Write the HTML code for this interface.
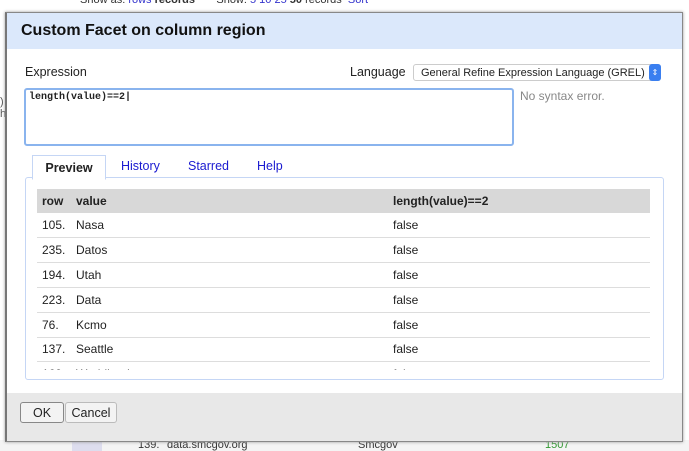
<!DOCTYPE html>
<html><head><style>
body{margin:0;width:689px;height:451px;overflow:hidden;background:#fff;font-family:"Liberation Sans",sans-serif;position:relative;font-size:12px;color:#222}
.a{position:absolute}
.dlg{left:5px;top:12px;width:675px;height:428px;border:1px solid #888;border-left:2px solid #777;background:#fff;box-shadow:0 0 3px #999}
.hdr{left:0;top:0;width:675px;height:36px;background:#dbe8fb;font-size:16px;font-weight:bold;line-height:36px;padding-left:14px;box-sizing:border-box;color:#111}
.tbl div{position:absolute}
.row{left:0;width:613px;height:24px;border-bottom:1px solid #ddd;line-height:24px}
.tab{top:146px;font-size:12.5px;color:#1a1ad0}
</style></head><body>
<div class="a" style="left:80px;top:-6px;font-size:11px;color:#333">Show as: <span style="color:#33c">rows</span> <b>records</b> &nbsp;&nbsp;&nbsp;&nbsp;&nbsp; Show: <span style="color:#33c">5 10 25</span> <b>50</b> records &nbsp;<span style="color:#33c">Sort</span></div>
<div class="a" style="left:0;top:96px;font-size:11px;color:#555">)<br>h</div>
<div class="a" style="left:0;top:440px;width:689px;height:11px;background:#f4f4f4;font-size:11px;line-height:10px;color:#333"><span class="a" style="left:72px;width:30px;height:11px;background:#dde"></span><span class="a" style="left:138px">139.</span><span class="a" style="left:167px">data.smcgov.org</span><span class="a" style="left:358px">Smcgov</span><span class="a" style="left:545px;color:#393">1507</span></div>
<div class="a dlg">
<div class="a hdr">Custom Facet on column region</div>
<div class="a" style="left:18px;top:52px;font-size:12.5px">Expression</div>
<div class="a" style="left:343px;top:52px;font-size:12.5px">Language</div>
<div class="a" style="left:406px;top:51px;width:248px;height:17px;border:1px solid #ccc;border-radius:3px;background:#fff;font-size:11px;line-height:17px;padding-left:7px;box-sizing:border-box">General Refine Expression Language (GREL)<span class="a" style="right:-1px;top:-1px;width:12px;height:17px;background:#3a7ff0;border-radius:3px;color:#fff;font-size:8px;text-align:center;line-height:17px">⇕</span></div>
<div class="a" style="left:17px;top:75px;width:490px;height:58px;border:2px solid #8ab4ee;border-radius:3px;box-sizing:border-box;font-family:'Liberation Mono',monospace;font-size:10px;font-weight:bold;padding:2px 3px">length(value)==2|</div>
<div class="a" style="left:513px;top:76px;font-size:12px;color:#888">No syntax error.</div>
<div class="a" style="left:18px;top:164px;width:637px;height:201px;border:1px solid #c5d6f5;border-radius:3px"></div>
<div class="a" style="left:25px;top:142px;width:72px;height:23px;border:1px solid #c5d6f5;border-bottom:1px solid #fff;background:#fff;font-weight:bold;font-size:12.5px;line-height:24px;text-align:center">Preview</div>
<div class="a tab" style="left:114px">History</div>
<div class="a tab" style="left:181px">Starred</div>
<div class="a tab" style="left:250px">Help</div>
<div class="a tbl" style="left:30px;top:176px;width:613px;height:181px;overflow:hidden;font-size:12px">
<div class="row" style="top:0;background:#d8d8d8;font-weight:bold;border:0"><div style="left:5px">row</div><div style="left:39px">value</div><div style="left:356px">length(value)==2</div></div>
<div class="row" style="top:24px"><div style="left:5px">105.</div><div style="left:39px">Nasa</div><div style="left:356px">false</div></div>
<div class="row" style="top:49px"><div style="left:5px">235.</div><div style="left:39px">Datos</div><div style="left:356px">false</div></div>
<div class="row" style="top:74px"><div style="left:5px">194.</div><div style="left:39px">Utah</div><div style="left:356px">false</div></div>
<div class="row" style="top:99px"><div style="left:5px">223.</div><div style="left:39px">Data</div><div style="left:356px">false</div></div>
<div class="row" style="top:124px"><div style="left:5px">76.</div><div style="left:39px">Kcmo</div><div style="left:356px">false</div></div>
<div class="row" style="top:148px"><div style="left:5px">137.</div><div style="left:39px">Seattle</div><div style="left:356px">false</div></div>
<div class="row" style="top:173px"><div style="left:5px">169.</div><div style="left:39px">Worldbank</div><div style="left:356px">false</div></div>
</div>
<div class="a" style="left:0;top:380px;width:675px;height:48px;background:#e8e8e8"></div>
<div class="a" style="left:13px;top:389px;width:44px;height:21px;border:1px solid #888;border-radius:3px;background:#f3f3f3;text-align:center;line-height:21px;font-size:12.5px;box-sizing:border-box">OK</div>
<div class="a" style="left:58px;top:389px;width:52px;height:21px;border:1px solid #bbb;border-radius:3px;background:#f3f3f3;text-align:center;line-height:21px;font-size:12.5px;box-sizing:border-box">Cancel</div>
</div>
</body></html>
